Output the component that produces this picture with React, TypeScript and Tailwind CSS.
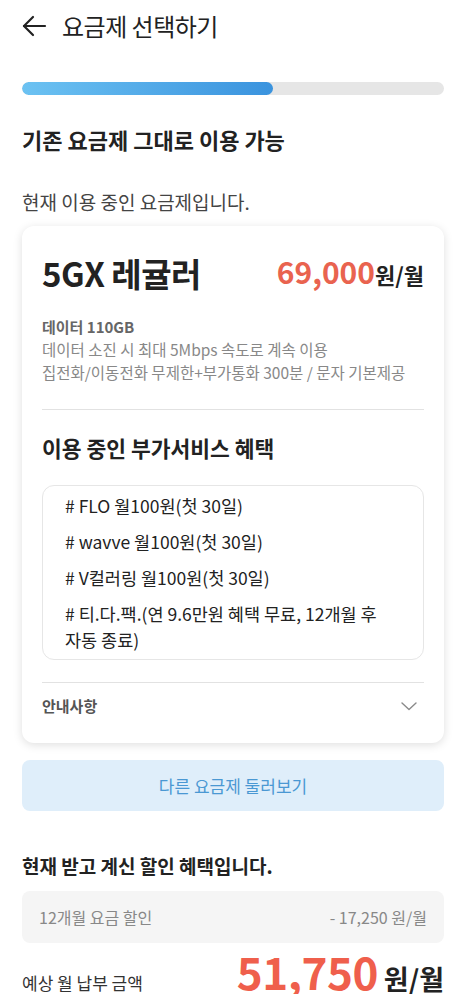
import React from "react";

const font = { fontFamily: '"Noto Sans CJK KR", "Noto Sans", sans-serif' };

export default function App() {
  return (
    <div className="w-[466px] h-[994px] overflow-hidden bg-white text-[#222]" style={font}>
      {/* Header */}
      <div className="flex items-center h-[52px] px-[20px]">
        <svg width="28" height="28" viewBox="0 0 28 28" fill="none" stroke="#222" strokeWidth="2.2" strokeLinecap="round" strokeLinejoin="round">
          <path d="M25 14H4" />
          <path d="M13 5L4 14L13 23" />
        </svg>
        <span className="ml-[14px] text-[24px] leading-none tracking-[-0.5px]">요금제 선택하기</span>
      </div>

      {/* Progress */}
      <div className="px-[22px] pt-[30px]">
        <div className="h-[13px] rounded-full bg-[#e6e6e6] overflow-hidden">
          <div className="h-full w-[59.5%] rounded-full bg-gradient-to-r from-[#6cc2f2] to-[#3a93de]" />
        </div>
      </div>

      <div className="px-[22px]">
        <div className="mt-[30px] text-[22px] font-bold leading-[28px]">기존 요금제 그대로 이용 가능</div>
        <div className="mt-[36px] text-[19px] leading-[26px] text-[#444]">현재 이용 중인 요금제입니다.</div>

        {/* Card */}
        <div className="mt-[11px] rounded-[12px] bg-white shadow-[0_2px_10px_rgba(0,0,0,0.13)] px-[20px]">
          <div className="flex items-center justify-between pt-[25px]">
            <span className="text-[33px] font-bold leading-[40px] tracking-[-0.5px]">5GX 레귤러</span>
            <span className="flex items-baseline">
              <span className="text-[30px] font-bold text-[#e9634f] leading-[40px]">69,000</span>
              <span className="text-[22px] font-bold leading-[40px]">원/월</span>
            </span>
          </div>
          <div className="mt-[22px] text-[15px] font-bold text-[#666] leading-[22px]">데이터 110GB</div>
          <div className="text-[15.5px] text-[#888] leading-[23px]">데이터 소진 시 최대 5Mbps 속도로 계속 이용</div>
          <div className="text-[15.5px] text-[#888] leading-[23px]">집전화/이동전화 무제한+부가통화 300분 / 문자 기본제공</div>
          <div className="mt-[25px] h-px bg-[#e2e2e2]" />
          <div className="mt-[24px] text-[21.5px] font-bold leading-[28px]">이용 중인 부가서비스 혜택</div>
          <div className="mt-[23px] rounded-[12px] border border-[#e6e6e6] pl-[22px] pr-[20px] pt-[2px] pb-[1px] text-[17.5px] leading-[26px] text-[#222] break-keep">
            <div className="py-[5px]"># FLO 월100원(첫 30일)</div>
            <div className="py-[5px]"># wavve 월100원(첫 30일)</div>
            <div className="py-[5px]"># V컬러링 월100원(첫 30일)</div>
            <div className="py-[5px]"># 티.다.팩.(연 9.6만원 혜택 무료, 12개월 후 자동 종료)</div>
          </div>
          <div className="mt-[22px] h-px bg-[#e2e2e2]" />
          <div className="flex items-center justify-between h-[46px]">
            <span className="text-[15px] font-bold text-[#555]">안내사항</span>
            <svg width="18" height="18" viewBox="0 0 18 18" fill="none" stroke="#8a8a8a" strokeWidth="1.4" strokeLinecap="round" strokeLinejoin="round" className="mr-[6px]">
              <path d="M2 6L9 12.5L16 6" />
            </svg>
          </div>
          <div className="h-[14px]" />
        </div>

        {/* Button */}
        <div className="mt-[17px] h-[51px] rounded-[8px] bg-[#dfeefa] flex items-center justify-center text-[17px] text-[#4a98d3]">
          다른 요금제 둘러보기
        </div>

        <div className="mt-[42px] text-[19px] font-bold leading-[26px]">현재 받고 계신 할인 혜택입니다.</div>
        <div className="mt-[12px] h-[52px] rounded-[8px] bg-[#f5f5f5] flex items-center justify-between px-[17px] text-[16px] text-[#888]">
          <span>12개월 요금 할인</span>
          <span>- 17,250 원/월</span>
        </div>
        <div className="mt-[3px] flex items-baseline justify-between">
          <span className="text-[17px] text-[#333] leading-[50px]">예상 월 납부 금액</span>
          <span className="flex items-baseline">
            <span className="text-[44px] font-bold text-[#ef5f4c] leading-[50px] tracking-[-0.5px]">51,750</span>
            <span className="ml-[6px] text-[27px] font-bold leading-[50px]">원/월</span>
          </span>
        </div>
      </div>
    </div>
  );
}
